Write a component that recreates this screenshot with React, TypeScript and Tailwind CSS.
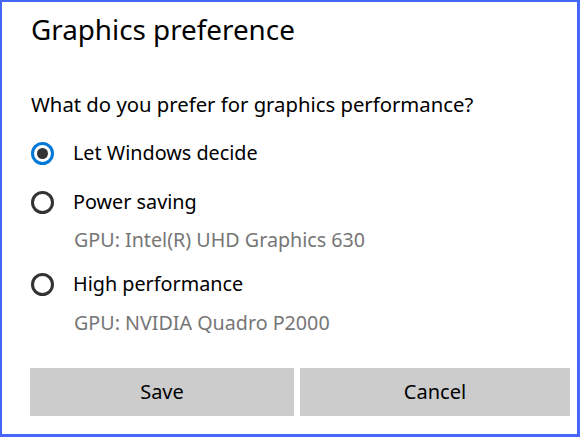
import React from "react";

const font = { fontFamily: '"Noto Sans", "Open Sans", sans-serif' };

function Radio({ checked, label }: { checked?: boolean; label: string }) {
  return (
    <div className="flex h-[28px] items-center">
      <div
        className={
          "flex h-[23px] w-[23px] shrink-0 items-center justify-center rounded-full border-[3px] " +
          (checked ? "border-[#0078d7]" : "border-[#333333]")
        }
      >
        {checked && <div className="h-[11px] w-[11px] rounded-full bg-[#333333]" />}
      </div>
      <span className="ml-[19px] text-[19.8px] text-black">{label}</span>
    </div>
  );
}

export default function App() {
  return (
    <div
      className="box-border h-[437px] w-[580px] border-b-[3px] border-l-[2px] border-r-[3px] border-t-[2px] border-[#4566f8] bg-white"
      style={font}
    >
      <div className="flex flex-col pl-[29px]">
        <div className="flex h-[56px] items-center text-[27.8px] text-black">Graphics preference</div>
        <div className="mt-[32px] flex h-[28px] items-center text-[20.3px] text-black">
          What do you prefer for graphics performance?
        </div>
        <div className="mt-[21px]">
          <Radio checked label="Let Windows decide" />
        </div>
        <div className="mt-[21px]">
          <Radio label="Power saving" />
        </div>
        <div className="mt-[10px] flex h-[28px] items-center pl-[43px] text-[19.7px] text-[#767676]">
          GPU: Intel(R) UHD Graphics 630
        </div>
        <div className="mt-[16px]">
          <Radio label="High performance" />
        </div>
        <div className="mt-[11px] flex h-[28px] items-center pl-[43px] text-[19.7px] text-[#767676]">
          GPU: NVIDIA Quadro P2000
        </div>
        <div className="ml-[-1px] mt-[31px] flex gap-[6px]">
          <button className="flex h-[48px] w-[264px] items-center justify-center bg-[#cccccc] text-[20px] text-black">
            Save
          </button>
          <button className="flex h-[48px] w-[270px] items-center justify-center bg-[#cccccc] text-[20px] text-black">
            Cancel
          </button>
        </div>
      </div>
    </div>
  );
}
